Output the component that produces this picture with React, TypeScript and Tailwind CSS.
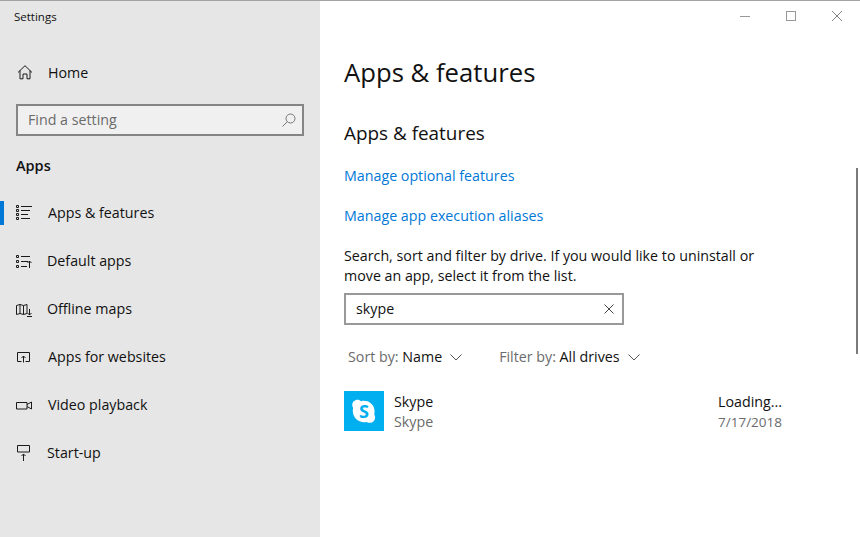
const font = { fontFamily: '"Open Sans", "Noto Sans", sans-serif' };

function Svg({ children }: { children: React.ReactNode }) {
  return (
    <svg width={18} height={16} viewBox="0 0 18 16" fill="none" stroke="#1a1a1a" strokeWidth="1" className="shrink-0">
      {children}
    </svg>
  );
}

const HomeIcon = () => (
  <Svg>
    <path d="M2 7.500 9 .7l7 6.800M4 5.500v8.300h3V9h4v4.800h3V5.500" />
  </Svg>
);
const ListIcon = () => (
  <Svg>
    <path d="M.5.500h2v2h-2zM.5 4.500h2v2h-2zM.5 8.500h2v2h-2zM.5 12.500h2v2h-2z" />
    <path d="M5 1.500h11M5 5.500h9M5 9.500h7M5 13.500h9" />
  </Svg>
);
const DefaultIcon = () => (
  <Svg>
    <path d="M.5 2.500h2v2h-2zM.5 7.500h2v2h-2zM.5 12.500h2v2h-2z" />
    <path d="M5 3.500h9M5 8.500h7M5 13.500h6M13.500 15V8M11.500 10l2-2 2 2" />
  </Svg>
);
const MapIcon = () => (
  <Svg>
    <path d="M.5 4.500 4 3.500l3.500 1 3.500-1v9l-3.500 1-3.500-1-3.500 1zM4 3.500v9M7.500 4.500v9M13.500 8v6M11.500 12l2 2 2-2M11 15.500h5" />
  </Svg>
);
const WebIcon = () => (
  <Svg>
    <path d="M5.500 12.500h-4v-9h12v9h-4M7.500 13.500V7M5.500 9l2-2 2 2" />
  </Svg>
);
const VideoIcon = () => (
  <Svg>
    <path d="M.5 5.500h10.500v6.500H.5zM11 7.500 15.500 5v7L11 9.500" />
  </Svg>
);
const StartIcon = () => (
  <Svg>
    <path d="M1.500.5h12v6.500h-12zM7.500 16V9M5.500 11l2-2 2 2" />
  </Svg>
);

const nav = [
  { label: "Apps & features", Icon: ListIcon, active: true, gap: "gap-[14px]" },
  { label: "Default apps", Icon: DefaultIcon, gap: "gap-[13px]" },
  { label: "Offline maps", Icon: MapIcon, gap: "gap-[13px]" },
  { label: "Apps for websites", Icon: WebIcon, gap: "gap-[14px]" },
  { label: "Video playback", Icon: VideoIcon, gap: "gap-[14px]" },
  { label: "Start-up", Icon: StartIcon, gap: "gap-[13px]" },
];

const Chevron = () => (
  <svg width="12" height="7" viewBox="0 0 12 7" fill="none" stroke="#555" strokeWidth="1">
    <path d="M.5.500 6 6 11.500.500" />
  </svg>
);

export default function App() {
  return (
    <div style={font} className="w-[860px] h-[537px] overflow-hidden relative flex flex-col bg-white text-[14.25px] leading-[20px] text-[#111] border-t border-[#a3a3a3]">
      <div className="flex flex-1">
        <aside className="w-[320px] shrink-0 bg-[#e6e6e6] flex flex-col">
          <div className="pl-[14px] pt-[7px] text-[11.5px] leading-[18px]">Settings</div>
          <div className="flex items-center gap-[14px] pl-[16px] mt-[37px] h-[20px]">
            <HomeIcon />
            <span>Home</span>
          </div>
          <div className="mx-[16px] mt-[21px] h-[32px] border-2 border-[#858585] bg-[#f0f0f0] flex items-center justify-between pl-[10px] pr-[6px] text-[#6b6b6b]">
            <span className="mb-[1px]">Find a setting</span>
            <svg width="14" height="14" viewBox="0 0 14 14" fill="none" stroke="#777" strokeWidth="1">
              <circle cx="8.500" cy="5.500" r="4.500" />
              <path d="M5.300 8.700.5 13.500" />
            </svg>
          </div>
          <div className="pl-[16px] mt-[20px] font-semibold h-[20px] text-[14.5px]">Apps</div>
          <nav className="mt-[13px] flex flex-col">
            {nav.map(({ label, Icon, active, gap }) => (
              <div key={label} className={`h-[48px] flex items-center ${gap} pl-[16px] relative`}>
                {active && <span className="absolute left-0 top-[12px] h-[24px] w-[4px] bg-[#0078d7]" />}
                <Icon />
                <span className="mb-[1px]">{label}</span>
              </div>
            ))}
          </nav>
        </aside>
        <main className="flex-1 flex flex-col relative">
          <div className="h-[30px] flex items-center justify-end">
            <div className="flex items-center gap-[36px] pr-[18px]">
              <span className="w-[10px] h-px bg-[#999]" />
              <span className="w-[10px] h-[10px] border border-[#999]" />
              <svg width="10" height="10" viewBox="0 0 10 10" stroke="#888" strokeWidth="1"><path d="M0 0l10 10M10 0 0 10" /></svg>
            </div>
          </div>
          <div className="pl-[24px] flex flex-col items-start">
            <h1 className="text-[25.7px] leading-[36px] mt-[24px] font-normal">Apps &amp; features</h1>
            <h2 className="text-[18.9px] leading-[26px] mt-[29px] font-normal">Apps &amp; features</h2>
            <a className="text-[#0078d7] mt-[20px]">Manage optional features</a>
            <a className="text-[#0078d7] mt-[20px]">Manage app execution aliases</a>
            <p className="mt-[20px] w-[440px]">Search, sort and filter by drive. If you would like to uninstall or move an app, select it from the list.</p>
            <div className="mt-[7px] w-[280px] h-[32px] border-2 border-[#999] flex items-center justify-between pl-[10px] pr-[8px]">
              <span>skype</span>
              <svg width="10" height="10" viewBox="0 0 10 10" stroke="#444" strokeWidth="1"><path d="M.5.500l9 9M9.500.500l-9 9" /></svg>
            </div>
            <div className="mt-[22px] flex items-center pl-[4px]">
              <span className="text-[#6b6b6b]">Sort by:&nbsp;</span>
              <span>Name</span>
              <span className="ml-[8px] mr-[37px]"><Chevron /></span>
              <span className="text-[#6b6b6b]">Filter by:&nbsp;</span>
              <span>All drives</span>
              <span className="ml-[8px]"><Chevron /></span>
            </div>
            <div className="mt-[23px] w-[438px] flex items-center">
              <div className="w-[40px] h-[40px] bg-[#00aff0] flex items-center justify-center shrink-0">
                <svg width="32" height="32" viewBox="0 0 30 30">
                  <path fill="#fff" d="M15 5.500c-1 0-1.900.1-2.700.4C11.500 4.900 10.300 4.400 9 4.400 6.200 4.400 4 6.600 4 9.400c0 1 .3 1.900.8 2.700-.2.900-.3 1.900-.3 2.900 0 5.800 4.700 10.500 10.500 10.500.9 0 1.800-.1 2.600-.3.8.5 1.700.8 2.800.8 2.800 0 5-2.200 5-5 0-1-.3-2-.8-2.800.2-.9.300-1.800.3-2.700C25 10.200 20.800 5.500 15 5.500z" />
                  <text x="15" y="21.500" textAnchor="middle" fontSize="17" fontWeight="700" fill="#00aff0" style={font}>S</text>
                </svg>
              </div>
              <div className="ml-[10px] flex-1 pt-[2px]">
                <div>Skype</div>
                <div className="text-[#6b6b6b]">Skype</div>
              </div>
              <div className="text-right pt-[2px]">
                <div>Loading...</div>
                <div className="text-[#6b6b6b] text-[13.5px]">7/17/2018</div>
              </div>
            </div>
          </div>
          <span className="absolute right-[2px] top-[167px] h-[186px] w-[2px] bg-[#7a7a7a]" />
        </main>
      </div>
    </div>
  );
}
